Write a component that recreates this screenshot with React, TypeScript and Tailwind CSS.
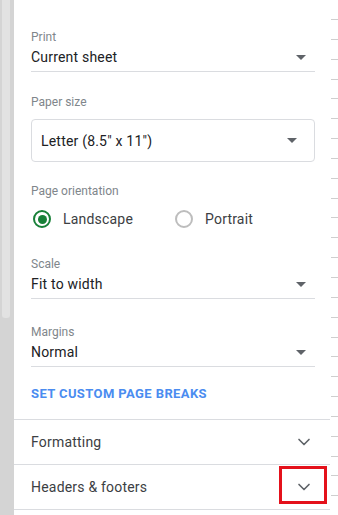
import { ChevronDown } from 'lucide-react';

const Caret = () => (
  <svg width="10" height="5" viewBox="0 0 10 5" className="shrink-0">
    <path d="M0 0h10L5 5z" fill="#5f6368" />
  </svg>
);

const SelectLine = ({ label, value, mt }: { label: string; value: string; mt: string }) => (
  <div className={mt}>
    <div className="text-[12px] leading-[16px] text-[#80868b]">{label}</div>
    <div className="mt-[2px] flex items-center justify-between border-b border-[#dadce0] pb-[4px] pr-[9px]">
      <span className="text-[14px] leading-[20px] tracking-[0.2px] text-[#202124]">{value}</span>
      <Caret />
    </div>
  </div>
);

const Radio = ({ checked, label }: { checked: boolean; label: string }) => (
  <div className="flex items-center">
    <div
      className={`flex h-[18px] w-[18px] items-center justify-center rounded-full border-2 ${
        checked ? 'border-[#188038]' : 'border-[#bdbdbd]'
      }`}
    >
      {checked && <div className="h-[9px] w-[9px] rounded-full bg-[#188038]" />}
    </div>
    <span className="ml-[12px] text-[14px] leading-[20px] tracking-[0.2px] text-[#3c4043]">{label}</span>
  </div>
);

const App = () => {
  const dashes = Array.from({ length: 25 }, (_, i) => i);

  return (
    <div className="flex h-[515px] w-[338px] overflow-hidden bg-white font-['Roboto',sans-serif]">
      <div className="w-[14px] shrink-0 bg-[#d4d4d4] pl-[2px] pr-[4px]">
        <div className="h-[318px] rounded-b-[3px] bg-[#e2e2e2]" />
      </div>

      <div className="relative flex w-[316px] shrink-0 flex-col bg-white">
        <div className="pl-[17px] pr-[15px] pt-[29px]">
          <SelectLine label="Print" value="Current sheet" mt="" />

          <div className="mt-[22px]">
            <div className="text-[12px] leading-[16px] text-[#80868b]">Paper size</div>
            <div className="mt-[9px] flex h-[43px] items-center justify-between rounded-[4px] border border-[#dadce0] pl-[9px] pr-[17px]">
              <span className="text-[14px] leading-[20px] tracking-[0.2px] text-[#202124]">Letter (8.5" x 11")</span>
              <Caret />
            </div>
          </div>

          <div className="mt-[21px]">
            <div className="text-[12px] leading-[16px] text-[#80868b]">Page orientation</div>
            <div className="mt-[8px] flex h-[24px] items-center pl-[2px]">
              <div className="w-[142px]">
                <Radio checked label="Landscape" />
              </div>
              <Radio checked={false} label="Portrait" />
            </div>
          </div>

          <SelectLine label="Scale" value="Fit to width" mt="mt-[25px]" />
          <SelectLine label="Margins" value="Normal" mt="mt-[25px]" />

          <div className="mt-[19px] pb-[17px] text-[13px] font-bold leading-[16px] tracking-[0.4px] text-[#4a8cf0]">
            SET CUSTOM PAGE BREAKS
          </div>
        </div>

        <div className="flex h-[45px] items-center justify-between border-t border-[#dadce0] pl-[17px] pr-[16px]">
          <span className="text-[14px] tracking-[0.2px] text-[#3c4043]">Formatting</span>
          <ChevronDown size={20} strokeWidth={2} className="text-[#5f6368]" />
        </div>
        <div className="flex h-[46px] items-center justify-between border-t border-b border-[#dadce0] pl-[17px] pr-[16px]">
          <span className="text-[14px] tracking-[0.2px] text-[#3c4043]">Headers &amp; footers</span>
          <ChevronDown size={20} strokeWidth={2} className="text-[#5f6368]" />
        </div>

        <div className="absolute left-[265px] top-[466px] h-[38px] w-[48px] border-[3px] border-[#e4111b]" />
      </div>

      <div className="flex flex-1 flex-col pt-[19px]">
        {dashes.map((i) => (
          <div key={i} className="mb-[19px] ml-[1px] h-px w-[7px] bg-[#cfcfcf]" />
        ))}
      </div>
    </div>
  );
};

export default App;
